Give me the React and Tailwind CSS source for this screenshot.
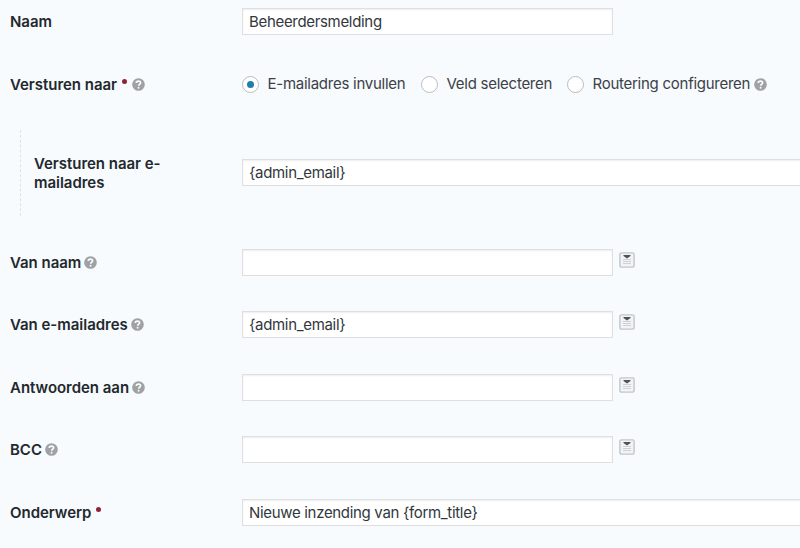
import clsx from 'clsx';

function HelpIcon({ className }) {
  return (
    <svg viewBox="0 0 14 14" className={clsx('w-[13px] h-[13px] shrink-0', className)}>
      <circle cx="7" cy="7" r="6.8" fill="#9fa1a3" />
      <path
        d="M4.6 5.4c0-1.3 1-2.1 2.4-2.1s2.3.8 2.3 1.9c0 1.6-2.1 1.5-2.1 3.1"
        fill="none"
        stroke="#f7fbfe"
        strokeWidth="1.8"
      />
      <circle cx="7.1" cy="10.5" r="1.05" fill="#f7fbfe" />
    </svg>
  );
}

function MergeTagIcon() {
  return (
    <svg viewBox="0 0 16 16" className="w-4 h-4 ml-[6px] mb-[5px] shrink-0">
      <rect x="0.9" y="0.9" width="14.2" height="14.2" rx="1.5" fill="#f1f3f4" stroke="#c3c6c8" strokeWidth="1.4" />
      <path d="M4.5 3h7v1L8 6.4 4.5 4z" fill="#505356" />
      <path d="M4 7.5h8M4 9.5h8M4 11.5h8" stroke="#cfd1d3" strokeWidth="1" />
    </svg>
  );
}

function Row({ label, required, help, nested, className, children }) {
  return (
    <div className={clsx('flex items-center', className)}>
      <div
        className={clsx(
          'shrink-0 flex items-center',
          nested ? 'w-[222px] h-[86px] ml-[10px] pl-[13px] border-l border-dashed border-[#dfe2e5]' : 'w-[232px]'
        )}
      >
        <span className="font-semibold text-[#23282d] leading-[19px] tracking-[-0.03px]">{label}</span>
        {required && <span className="w-[5px] h-[5px] ml-[5px] mb-[6px] rounded-full bg-[#8f2337]" />}
        {help && <HelpIcon className={required ? 'ml-[5.5px]' : 'ml-[3px]'} />}
      </div>
      {children}
    </div>
  );
}

function Field({ value, wide }) {
  return (
    <input
      type="text"
      defaultValue={value}
      className={clsx(
        'h-[27px] shrink-0 bg-white border border-[#dddfe1] pl-[6px] text-[#32373c] tracking-[-0.32px] outline-none shadow-[inset_0_1px_2px_rgba(0,0,0,0.07)]',
        wide ? 'w-[570px]' : 'w-[371px]'
      )}
    />
  );
}

function Radio({ label, checked, className }) {
  return (
    <label className={clsx('flex items-center shrink-0', className)}>
      <span className="w-[17px] h-[17px] rounded-full bg-white border border-[#b9bdc0] flex items-center justify-center">
        {checked && <span className="w-[7px] h-[7px] rounded-full bg-[#1e7fac]" />}
      </span>
      <span className="ml-[8.5px] whitespace-nowrap tracking-[-0.26px]">{label}</span>
    </label>
  );
}

export default function App() {
  return (
    <div className="w-[800px] h-[548px] overflow-hidden bg-[#f7fbfe] pl-[10px] font-['Inter',sans-serif] text-[15px] text-[#3c4146]">
      <Row label="Naam" className="h-[42px]">
        <Field value="Beheerdersmelding" />
      </Row>
      <Row label="Versturen naar" required help className="h-[63px] mt-[10.5px]">
        <Radio label="E-mailadres invullen" checked className="w-[179px]" />
        <Radio label="Veld selecteren" className="w-[146px]" />
        <Radio label="Routering configureren" />
        <HelpIcon className="ml-1" />
      </Row>
      <Row
        label={<>Versturen naar e-<br />mailadres</>}
        nested
        className="h-[114px] mb-[1.5px]"
      >
        <Field value="{admin_email}" wide />
      </Row>
      <Row label="Van naam" help className="h-[62.5px]">
        <Field />
        <MergeTagIcon />
      </Row>
      <Row label="Van e-mailadres" help className="h-[62.5px]">
        <Field value="{admin_email}" />
        <MergeTagIcon />
      </Row>
      <Row label="Antwoorden aan" help className="h-[62.5px]">
        <Field />
        <MergeTagIcon />
      </Row>
      <Row label="BCC" help className="h-[62.5px]">
        <Field />
        <MergeTagIcon />
      </Row>
      <Row label="Onderwerp" required className="h-[62.5px]">
        <Field value="Nieuwe inzending van {form_title}" wide />
      </Row>
    </div>
  );
}
